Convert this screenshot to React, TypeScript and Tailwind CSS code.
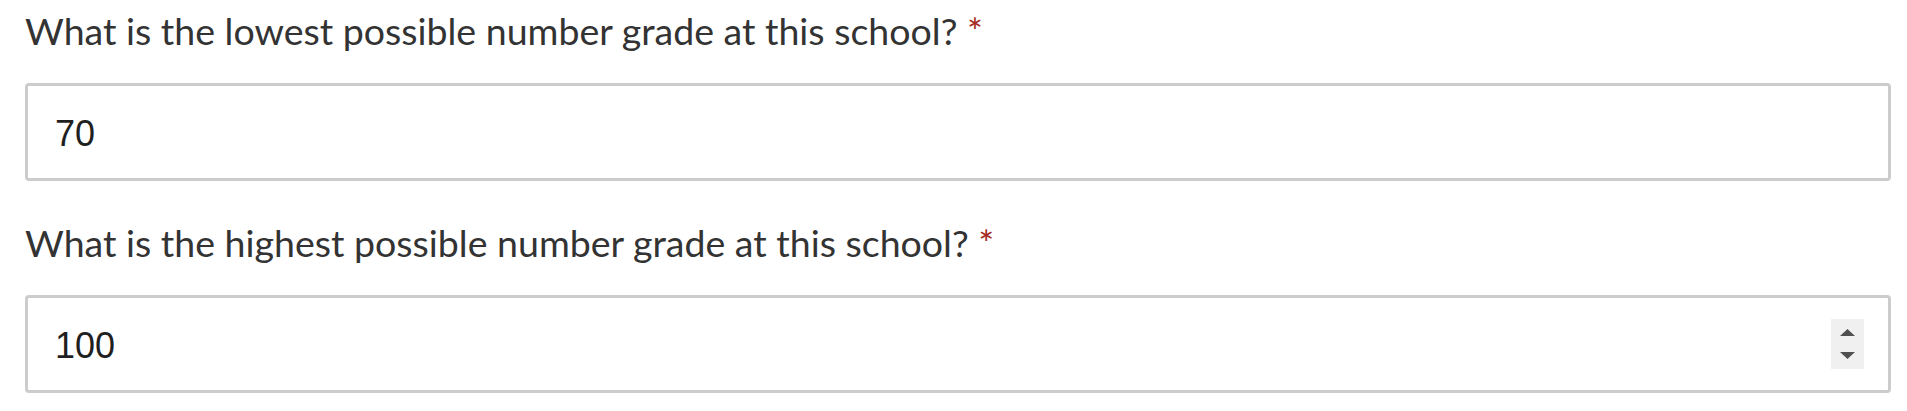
import { useState } from "react";

const labelFont = { fontFamily: '"Lato", "Open Sans", sans-serif' };

function Spinner() {
  return (
    <div className="flex h-[50px] w-[33px] shrink-0 items-center justify-center bg-[#f0f0f0]">
      <svg width="33" height="50" viewBox="0 0 33 50">
        <polygon points="9,17 24,17 16.5,10" fill="#505050" />
        <polygon points="9,33 24,33 16.5,40" fill="#505050" />
      </svg>
    </div>
  );
}

function NumberField({
  label,
  value,
  showSpinner,
  className = "",
}: {
  label: string;
  value: string;
  showSpinner?: boolean;
  className?: string;
}) {
  const [val, setVal] = useState(value);
  return (
    <div className={`flex flex-col ${className}`}>
      <label
        className="mb-[28px] text-[37.5px] leading-[48px] text-[#333333]"
        style={labelFont}
      >
        {label} <span className="text-[#a52a1f]">*</span>
      </label>
      <div className="flex h-[98px] items-center rounded-[4px] border-[3px] border-[#cccccc] bg-white pl-[27px] pr-[24px]">
        <input
          type="text"
          value={val}
          onChange={(e) => setVal(e.target.value)}
          className="min-w-0 flex-1 bg-transparent pt-[3px] text-[36px] text-[#1f1f1f] outline-none"
          style={{ fontFamily: '"Liberation Sans", Arial, sans-serif' }}
        />
        {showSpinner && <Spinner />}
      </div>
    </div>
  );
}

export default function App() {
  return (
    <div className="h-[411px] w-[1907px] bg-white pl-[25px] pt-[7px]">
      <div className="w-[1866px]">
        <NumberField label="What is the lowest possible number grade at this school?" value="70" />
        <NumberField
          className="mt-[38px]"
          label="What is the highest possible number grade at this school?"
          value="100"
          showSpinner
        />
      </div>
    </div>
  );
}
